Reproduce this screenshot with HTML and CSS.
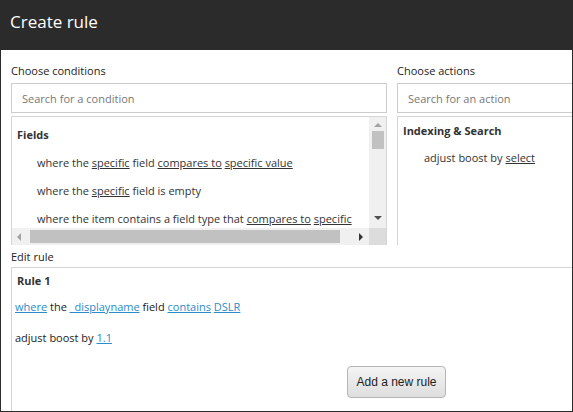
FILE: index.html
```html
<!DOCTYPE html>
<html lang="en">
<head>
  <meta charset="UTF-8" />
  <title>Create rule</title>
  <link rel="stylesheet" href="styles.css">
</head>
<body>
  <div class="dialog">
    <div class="dialog-header">Create rule</div>

    <div class="dialog-body">
      <div class="columns">
        <div class="column">
          <div class="label">Choose conditions</div>
          <input class="search" type="text" placeholder="Search for a condition" />
          <div class="listbox">
            <div class="list-content">
              <div class="group-title">Fields</div>
              <div class="item">where the <u>specific</u> field <u>compares to</u> <u>specific value</u></div>
              <div class="item">where the <u>specific</u> field is empty</div>
              <div class="item">where the item contains a field type that <u>compares to</u> <u>specific</u></div>
            </div>
            <div class="vscroll">
              <span class="arrow up"></span>
              <span class="vthumb"></span>
              <span class="arrow down"></span>
            </div>
            <div class="hscroll">
              <span class="arrow left"></span>
              <span class="hthumb"></span>
              <span class="arrow right"></span>
            </div>
            <div class="corner"></div>
          </div>
        </div>

        <div class="column">
          <div class="label">Choose actions</div>
          <input class="search" type="text" placeholder="Search for an action" />
          <div class="listbox actions">
            <div class="group-title">Indexing &amp; Search</div>
            <div class="item">adjust boost by <u>select</u></div>
          </div>
        </div>
      </div>

      <div class="label">Edit rule</div>
      <div class="rule-box">
        <div class="rule-title">Rule 1</div>
        <p class="rule-line"><a href="#">where</a> the <a href="#">_displayname</a> field <a href="#">contains</a> <a href="#">DSLR</a></p>
        <p class="rule-line">adjust boost by <a href="#">1.1</a></p>
        <div class="rule-actions">
          <button class="add-btn">Add a new rule</button>
        </div>
      </div>
    </div>
  </div>
</body>
</html>
```

FILE: styles.css
```css
html, body {
  margin: 0;
  padding: 0;
}
body {
  width: 573px;
  height: 412px;
  overflow: hidden;
  font-family: "Open Sans", Arial, sans-serif;
  font-size: 11px;
  color: #333;
  background: #fff;
}
.dialog {
  box-sizing: border-box;
  width: 573px;
  height: 412px;
  border: 1px solid #2b2b2b;
  border-top: none;
  overflow: hidden;
}
.dialog-header {
  height: 50px;
  background: #2b2b2b;
  color: #fff;
  font-size: 17px;
  line-height: 44px;
  padding-left: 10px;
  margin-left: -1px;
  margin-right: -1px;
}
.dialog-body {
  width: 772px;
  padding: 11px 10px 0;
}
.columns {
  display: flex;
  gap: 10px;
}
.column {
  width: 376px;
}
.label {
  height: 20px;
  line-height: 20px;
  color: #222;
}
.search {
  display: block;
  box-sizing: border-box;
  width: 100%;
  height: 30px;
  margin: 2px 0 3px;
  padding: 0 10px;
  border: 1px solid #ccc;
  font-family: inherit;
  font-size: 11px;
  color: #333;
}
.search::placeholder {
  color: #777;
}
.listbox {
  box-sizing: border-box;
  height: 129px;
  border: 1px solid #d5d5d5;
  border-bottom: none;
  display: grid;
  grid-template-columns: 1fr 17px;
  grid-template-rows: 1fr 17px;
  margin-bottom: 2px;
}
.list-content {
  overflow: hidden;
  white-space: nowrap;
  padding: 8px 5px 0;
}
.group-title {
  font-weight: bold;
  height: 20px;
  line-height: 20px;
  margin-bottom: 4px;
}
.item {
  height: 28px;
  line-height: 28px;
  padding-left: 20px;
}
.listbox u {
  text-decoration-color: #333;
}
.actions {
  display: block;
  padding: 3px 5px 0;
}
.actions .group-title {
  height: 22px;
  line-height: 22px;
  margin-bottom: 2px;
}
.actions .item {
  padding-left: 21px;
}

/* fake scrollbars */
.vscroll, .hscroll {
  background: #f0f0f0;
  display: flex;
  align-items: center;
  justify-content: space-between;
}
.vscroll {
  flex-direction: column;
  padding: 6px 0 8px;
}
.vthumb {
  width: 12px;
  height: 18px;
  background: #c1c1c1;
  margin: 4px 0 auto;
}
.hscroll {
  padding: 0 6px 0 5px;
}
.hthumb {
  height: 13px;
  flex: 1;
  background: #c1c1c1;
  margin: 0 19px 0 9px;
}
.corner {
  background: #dcdcdc;
}
.arrow {
  width: 0;
  height: 0;
  border: 4px solid transparent;
}
.arrow.up {
  border-top: none;
  border-bottom-color: #a3a3a3;
}
.arrow.down {
  border-bottom: none;
  border-top-color: #505050;
}
.arrow.left {
  border-left: none;
  border-right-color: #a3a3a3;
}
.arrow.right {
  border-right: none;
  border-left-color: #333;
}

.rule-box {
  box-sizing: border-box;
  height: 200px;
  border: 1px solid #d5d5d5;
  padding: 4px 4px 0 3px;
  color: #222;
}
.rule-title {
  font-weight: bold;
  color: #333;
  padding-left: 2px;
  height: 17px;
  line-height: 17px;
}
.rule-line {
  margin: 9px 0 0;
  line-height: 18px;
}
.rule-line + .rule-line {
  margin-top: 13px;
}
.rule-line a {
  color: #2a8ccc;
  text-decoration: underline;
}
.rule-actions {
  display: flex;
  justify-content: center;
  padding-top: 19px;
}
.add-btn {
  width: 99px;
  height: 32px;
  border: 1px solid #b5b5b5;
  border-radius: 4px;
  background: linear-gradient(#f4f4f4, #dedede);
  font-family: "Liberation Sans", Arial, sans-serif;
  font-size: 12px;
  color: #222;
}
```
